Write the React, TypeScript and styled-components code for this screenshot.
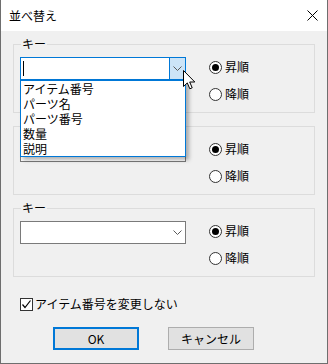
import React from 'react'
import styled, { createGlobalStyle } from 'styled-components'

const GlobalStyle = createGlobalStyle`
  html, body {
    margin: 0;
    padding: 0;
    background: #ffffff;
  }
  body {
    font-family: "Noto Sans CJK JP", "Noto Sans", sans-serif;
    font-size: 12px;
    color: #000000;
  }
`

// ウィンドウ本体
const StyledWindow = styled.div`
  position: relative;
  width: 328px;
  height: 364px;
  box-sizing: border-box;
  border: 1px solid #6e6e6e;
  border-top: none;
  background: #f0f0f0;
  display: flex;
  flex-direction: column;
`

const StyledTitleBar = styled.div`
  height: 31px;
  flex-shrink: 0;
  background: #ffffff;
  display: flex;
  align-items: center;
  justify-content: space-between;
  padding: 0 9px 0 8px;
  line-height: 14px;
`

const StyledBody = styled.div`
  padding: 13px 12px 0 12px;
  display: flex;
  flex-direction: column;
`

const StyledGroups = styled.div`
  display: flex;
  flex-direction: column;
  gap: 13px;
`

const StyledGroup = styled.div<{ $raised?: boolean }>`
  position: relative;
  height: 69px;
  box-sizing: border-box;
  border: 1px solid #dcdcdc;
  padding: 12px 0 0 6px;
  display: flex;
  gap: 23px;
  z-index: ${p => (p.$raised ? 2 : 0)};
`

const StyledLegend = styled.span`
  position: absolute;
  top: -9px;
  left: 7px;
  padding: 0 1px;
  background: #f0f0f0;
  line-height: 16px;
`

const StyledCombo = styled.div<{ $focused?: boolean }>`
  position: relative;
  width: 166px;
  height: 23px;
  box-sizing: border-box;
  border: 1px solid ${p => (p.$focused ? '#0078d7' : '#7a7a7a')};
  background: #ffffff;
  display: flex;
  align-items: stretch;
`

const StyledComboText = styled.div`
  flex: 1;
  display: flex;
  align-items: center;
  padding-left: 2px;
`

const StyledCaret = styled.span`
  width: 1px;
  height: 15px;
  background: #000000;
`

const StyledComboButton = styled.div<{ $focused?: boolean }>`
  width: 16px;
  box-sizing: border-box;
  display: flex;
  align-items: center;
  justify-content: center;
  background: ${p => (p.$focused ? '#cce4f7' : 'transparent')};
  border-left: 1px solid ${p => (p.$focused ? '#0078d7' : 'transparent')};
`

const StyledDropList = styled.ul`
  position: absolute;
  top: calc(100% + 1px);
  left: -1px;
  width: 166px;
  box-sizing: border-box;
  margin: 0;
  padding: 0;
  list-style: none;
  background: #ffffff;
  border: 1px solid #0078d7;
  box-shadow: 3px 3px 4px rgba(0, 0, 0, 0.3);
  z-index: 5;
`

const StyledDropItem = styled.li`
  height: 15px;
  line-height: 15px;
  padding-left: 2px;
  white-space: nowrap;
`

const StyledRadios = styled.div`
  display: flex;
  flex-direction: column;
  gap: 5px;
  margin-top: -1px;
`

const StyledRadioRow = styled.label`
  height: 22px;
  display: flex;
  align-items: center;
  gap: 3px;
  line-height: 14px;
`

const StyledRadioCircle = styled.span<{ $checked?: boolean }>`
  width: 13px;
  height: 13px;
  box-sizing: border-box;
  border: 1px solid #333333;
  border-radius: 50%;
  background: #ffffff;
  display: flex;
  align-items: center;
  justify-content: center;

  &::after {
    content: '';
    width: 7px;
    height: 7px;
    border-radius: 50%;
    background: ${p => (p.$checked ? '#000000' : 'transparent')};
  }
`

const StyledCheckRow = styled.label`
  display: flex;
  align-items: center;
  gap: 2px;
  margin: 20px 0 0 7px;
  line-height: 14px;
`

const StyledCheckBox = styled.span`
  width: 13px;
  height: 13px;
  box-sizing: border-box;
  border: 1px solid #333333;
  background: #ffffff;
  display: flex;
  align-items: center;
  justify-content: center;
`

const StyledButtons = styled.div`
  display: flex;
  gap: 29px;
  margin: 16px 0 0 40px;
`

const StyledButton = styled.div<{ $default?: boolean }>`
  width: 86px;
  height: 23px;
  box-sizing: border-box;
  border: ${p => (p.$default ? '2px solid #0078d7' : '1px solid #adadad')};
  background: #e1e1e1;
  display: flex;
  align-items: center;
  justify-content: center;
  line-height: 14px;
`

const StyledCursor = styled.svg`
  position: absolute;
  left: 182px;
  top: 70px;
  z-index: 10;
`

const Chevron = () => (
  <svg width="9" height="5" viewBox="0 0 9 5">
    <path d="M0.5 0.5 L4.5 4.5 L8.5 0.5" fill="none" stroke="#5a5a5a" strokeWidth="1" />
  </svg>
)

const items = ['アイテム番号', 'パーツ名', 'パーツ番号', '数量', '説明']

interface IKeyGroupProps {
  focused?: boolean
  open?: boolean
}

const KeyGroup = ({ focused, open }: IKeyGroupProps) => (
  <StyledGroup $raised={open}>
    <StyledLegend>キー</StyledLegend>
    <StyledCombo $focused={focused}>
      <StyledComboText>{focused && <StyledCaret />}</StyledComboText>
      <StyledComboButton $focused={focused}>
        <Chevron />
      </StyledComboButton>
      {open && (
        <StyledDropList>
          {items.map(item => (
            <StyledDropItem key={item}>{item}</StyledDropItem>
          ))}
        </StyledDropList>
      )}
    </StyledCombo>
    <StyledRadios>
      <StyledRadioRow>
        <StyledRadioCircle $checked />
        昇順
      </StyledRadioRow>
      <StyledRadioRow>
        <StyledRadioCircle />
        降順
      </StyledRadioRow>
    </StyledRadios>
  </StyledGroup>
)

export default function App() {
  return (
    <>
      <GlobalStyle />
      <StyledWindow>
        <StyledTitleBar>
          <span>並べ替え</span>
          <svg width="11" height="11" viewBox="0 0 11 11">
            <path d="M0.5 0.5 L10.5 10.5 M10.5 0.5 L0.5 10.5" stroke="#000" strokeWidth="1" />
          </svg>
        </StyledTitleBar>
        <StyledBody>
          <StyledGroups>
            <KeyGroup focused open />
            <KeyGroup />
            <KeyGroup />
          </StyledGroups>
          <StyledCheckRow>
            <StyledCheckBox>
              <svg width="11" height="11" viewBox="0 0 11 11">
                <path d="M1.5 5.5 L4 8.5 L9.5 1.5" fill="none" stroke="#000" strokeWidth="1.2" />
              </svg>
            </StyledCheckBox>
            アイテム番号を変更しない
          </StyledCheckRow>
          <StyledButtons>
            <StyledButton $default>OK</StyledButton>
            <StyledButton>キャンセル</StyledButton>
          </StyledButtons>
        </StyledBody>
        <StyledCursor width="13" height="21" viewBox="0 0 13 21">
          <path
            d="M0.5 0.5 L0.5 16.5 L4.3 12.9 L6.8 18.8 L9.2 17.8 L6.7 12 L11.8 12 Z"
            fill="#fff"
            stroke="#000"
            strokeWidth="1"
            strokeLinejoin="miter"
          />
        </StyledCursor>
      </StyledWindow>
    </>
  )
}
